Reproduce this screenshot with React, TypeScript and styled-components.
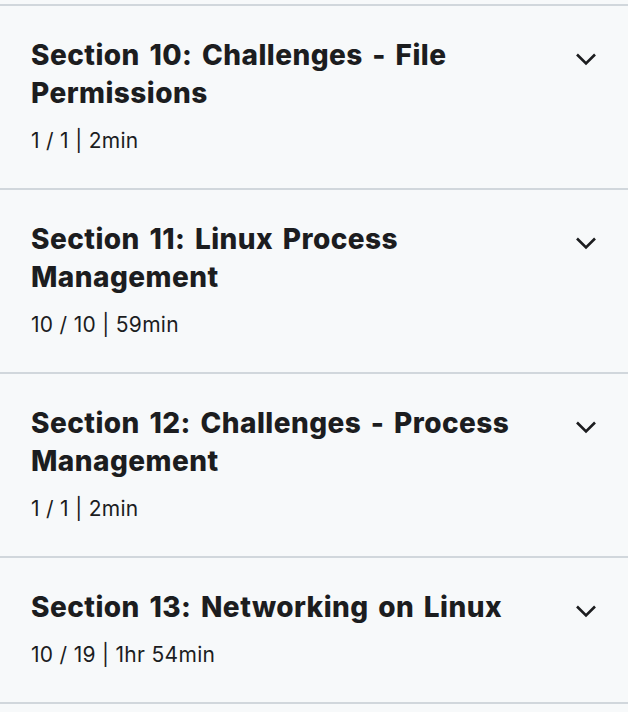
import React from "react";
import styled, { createGlobalStyle } from "styled-components";

const GlobalStyle = createGlobalStyle`
  html, body {
    margin: 0;
    padding: 0;
    background: #f7f9fa;
  }
  body {
    font-family: Inter, "Noto Sans", "Liberation Sans", sans-serif;
    color: #1c1d1f;
  }
`;

const Page = styled.div`
  width: 628px;
  min-height: 712px;
  background: #f7f9fa;
  padding-top: 4px;
  box-sizing: border-box;
`;

const List = styled.div`
  border-top: 2px solid #d1d7dc;
  display: flex;
  flex-direction: column;
`;

const Section = styled.div`
  border-bottom: 2px solid #d1d7dc;
  padding: 30px 30px 33px 31px;
  display: flex;
  align-items: flex-start;
  gap: 24px;
`;

const Info = styled.div`
  flex: 1;
  display: flex;
  flex-direction: column;
  min-width: 0;
`;

const Title = styled.h3`
  margin: 0;
  font-size: 28px;
  line-height: 38px;
  font-weight: 800;
  letter-spacing: 0.45px;
  word-spacing: 3px;
  color: #1c1d1f;
`;

const Meta = styled.div`
  margin-top: 15px;
  font-size: 21px;
  line-height: 28px;
  font-weight: 400;
  letter-spacing: 0.3px;
  color: #1c1d1f;
`;

const Chevron = styled.svg`
  flex: none;
  margin-top: 16px;
  width: 24px;
  height: 14px;
`;

const sections = [
  { title: "Section 10: Challenges - File Permissions", meta: "1 / 1 | 2min" },
  { title: "Section 11: Linux Process Management", meta: "10 / 10 | 59min" },
  { title: "Section 12: Challenges - Process Management", meta: "1 / 1 | 2min" },
  { title: "Section 13: Networking on Linux", meta: "10 / 19 | 1hr 54min" },
];

export default function App() {
  return (
    <>
      <GlobalStyle />
      <Page>
        <List>
          {sections.map((s) => (
            <Section key={s.title}>
              <Info>
                <Title>{s.title}</Title>
                <Meta>{s.meta}</Meta>
              </Info>
              <Chevron viewBox="0 0 24 14" fill="none">
                <path
                  d="M3 2.5 L12 11.5 L21 2.5"
                  stroke="#1c1d1f"
                  strokeWidth="2.6"
                  strokeLinecap="butt"
                  strokeLinejoin="miter"
                />
              </Chevron>
            </Section>
          ))}
        </List>
      </Page>
    </>
  );
}
